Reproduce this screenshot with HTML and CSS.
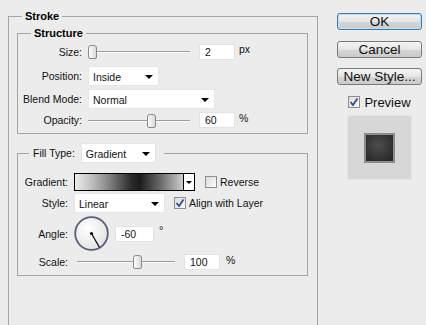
FILE: index.html
```html
<!DOCTYPE html>
<html lang="en">
<head>
    <meta charset="UTF-8">
    <title>Layer Style - Stroke</title>
    <link rel="stylesheet" href="styles.css">
</head>
<body>
<div class="dialog">
    <fieldset class="group stroke">
        <legend class="legend-main">Stroke</legend>
        <div class="stroke-body">

            <fieldset class="group structure">
                <legend class="legend-sub">Structure</legend>
                <div class="group-body">
                    <div class="row row-size">
                        <span class="lbl">Size:</span>
                        <div class="slider"><span class="thumb" style="left: 0px"></span></div>
                        <span class="num">2</span>
                        <span class="unit">px</span>
                    </div>
                    <div class="row row-sel">
                        <span class="lbl">Position:</span>
                        <div class="select sel-position">Inside</div>
                    </div>
                    <div class="row row-sel">
                        <span class="lbl">Blend Mode:</span>
                        <div class="select sel-blend">Normal</div>
                    </div>
                    <div class="row row-opacity">
                        <span class="lbl">Opacity:</span>
                        <div class="slider"><span class="thumb" style="left: 59px"></span></div>
                        <span class="num">60</span>
                        <span class="unit">%</span>
                    </div>
                </div>
            </fieldset>

            <fieldset class="group fill">
                <legend class="legend-fill">
                    <span>Fill Type:</span>
                    <div class="select sel-filltype">Gradient</div>
                </legend>
                <div class="group-body fill-body">
                    <div class="row row-gradient">
                        <span class="lbl lbl-fill">Gradient:</span>
                        <div class="gradient">
                            <span class="ramp"></span>
                            <span class="ramp-arrow"></span>
                        </div>
                        <label class="check-label reverse">
                            <span class="check"></span>Reverse
                        </label>
                    </div>
                    <div class="row row-style">
                        <span class="lbl lbl-fill">Style:</span>
                        <div class="select sel-style">Linear</div>
                        <label class="check-label align">
                            <span class="check">
                                <svg width="10" height="10" viewBox="0 0 10 10"><path d="M1.5 5 L4 8 L8.5 1.5" fill="none" stroke="#2a4d9c" stroke-width="1.8"/></svg>
                            </span>Align with Layer
                        </label>
                    </div>
                    <div class="row row-angle">
                        <span class="lbl lbl-fill">Angle:</span>
                        <svg class="dial" width="35" height="35" viewBox="0 0 35 35">
                            <defs>
                                <radialGradient id="dialFill" cx="40%" cy="35%" r="70%">
                                    <stop offset="0" stop-color="#ffffff"/>
                                    <stop offset="1" stop-color="#e2e2e2"/>
                                </radialGradient>
                            </defs>
                            <circle cx="17.5" cy="17.5" r="16.3" fill="url(#dialFill)" stroke="#56607a" stroke-width="1.8"/>
                            <line x1="17.5" y1="17.5" x2="25.4" y2="31.2" stroke="#000" stroke-width="1.2"/>
                            <circle cx="17.5" cy="17.5" r="1.6" fill="#000"/>
                        </svg>
                        <span class="num num-angle">-60</span>
                        <span class="deg">°</span>
                    </div>
                    <div class="row row-scale">
                        <span class="lbl lbl-fill">Scale:</span>
                        <div class="slider slider-scale"><span class="thumb" style="left: 56px"></span></div>
                        <span class="num">100</span>
                        <span class="unit">%</span>
                    </div>
                </div>
            </fieldset>

        </div>
    </fieldset>

    <div class="side">
        <button class="btn btn-default">OK</button>
        <button class="btn">Cancel</button>
        <button class="btn">New Style...</button>
        <label class="check-label preview">
            <span class="check">
                <svg width="10" height="10" viewBox="0 0 10 10"><path d="M1.5 5 L4 8 L8.5 1.5" fill="none" stroke="#2a4d9c" stroke-width="1.8"/></svg>
            </span>Preview
        </label>
        <div class="swatch">
            <div class="swatch-inner"></div>
        </div>
    </div>
</div>
</body>
</html>
```

FILE: styles.css
```css
body {
    margin: 0;
    background: #ececec;
    font-family: "Liberation Sans", Arial, sans-serif;
    font-size: 10.5px;
    color: #111;
    overflow: hidden;
}

.dialog {
    display: flex;
    align-items: flex-start;
}

/* group boxes */
.group {
    margin: 0;
    padding: 0;
    min-width: 0;
    border: 1px solid #a4a4a4;
    box-sizing: border-box;
}

/* outer box runs off the bottom of the window */
.stroke {
    margin: 9px 0 0 8px;
    width: 310px;
    height: 316px;
    border-bottom: none;
}

.legend-main,
.legend-sub {
    font-weight: bold;
    font-size: 11px;
    line-height: 14px;
    padding: 0 3px;
    color: #000;
}

.legend-main {
    margin-left: 13px;
}

.legend-sub {
    margin-left: 13px;
}

.stroke-body {
    padding: 3px 9px 0 8px;
}

.structure {
    width: 291px;
}

.group-body {
    display: flex;
    flex-direction: column;
    gap: 3px;
    padding: 3px 0 5px 0;
}

.fill {
    width: 291px;
    margin-top: 9px;
}

.legend-fill {
    margin-left: 11px;
    padding: 0 8px 0 4px;
    display: flex;
    align-items: center;
    gap: 6px;
    height: 20px;
}

.fill-body {
    padding: 10px 0 6px 0;
    gap: 0;
}

/* rows */
.row {
    display: flex;
    align-items: center;
}

.lbl {
    width: 64px;
    margin-right: 6px;
    text-align: right;
    flex-shrink: 0;
}

.lbl-fill {
    width: 50px;
}

.row-size {
    height: 17px;
    margin-bottom: 3px;
}

.row-sel {
    height: 20px;
}

.row-opacity {
    height: 16px;
}

.row-gradient {
    height: 18px;
}

.row-style {
    height: 20px;
    margin-top: 2px;
}

.row-angle {
    height: 35px;
    margin-top: 3px;
}

.row-scale {
    height: 15px;
    margin-top: 3px;
}

/* slider */
.slider {
    position: relative;
    width: 102px;
    height: 13px;
    flex-shrink: 0;
}

.slider::before {
    content: "";
    position: absolute;
    left: 0;
    right: 0;
    top: 6px;
    height: 1px;
    background: #9d9d9d;
    border-bottom: 1px solid #fafafa;
}

.slider-scale {
    width: 98px;
    margin-left: 3px;
}

.thumb {
    position: absolute;
    top: 0;
    width: 7px;
    height: 12px;
    border: 1px solid #8a8a8a;
    border-radius: 3px 3px 2px 2px;
    background: linear-gradient(to right, #fdfdfd, #d9d9d9);
}

/* number fields */
.num {
    display: block;
    box-sizing: border-box;
    width: 36px;
    height: 16px;
    line-height: 15px;
    padding-left: 5px;
    background: #fff;
    border: 1px solid #e3e3e3;
    margin-left: 9px;
}

.num-angle {
    width: 39px;
    margin-left: 6px;
}

.unit {
    margin-left: 4px;
    align-self: flex-start;
}

.row-scale .unit {
    margin-left: 6px;
}

.deg {
    margin-left: 5px;
    align-self: flex-start;
    margin-top: 8px;
    font-size: 11px;
}

/* selects */
.select {
    position: relative;
    box-sizing: border-box;
    height: 20px;
    line-height: 20px;
    padding-left: 4px;
    background: #fff;
    border: 1px solid #e6e6e6;
    flex-shrink: 0;
}

.select::after {
    content: "";
    position: absolute;
    right: 5px;
    top: 8px;
    border-left: 4px solid transparent;
    border-right: 4px solid transparent;
    border-top: 4px solid #000;
}

.sel-position {
    width: 71px;
}

.sel-blend {
    width: 127px;
}

.sel-filltype {
    width: 75px;
}

.sel-style {
    width: 91px;
}

/* gradient picker */
.gradient {
    display: flex;
    box-sizing: border-box;
    width: 121px;
    height: 18px;
    border: 1px solid #000;
    flex-shrink: 0;
}

.ramp {
    flex: 1;
    background: linear-gradient(to right, #ececec 0%, #cacaca 12%, #8a8a8a 30%, #2b2b2b 52%, #1c1c1c 60%, #6e6e6e 80%, #cdcdcd 100%);
}

.ramp-arrow {
    position: relative;
    width: 10px;
    border-left: 1px solid #000;
    background: #fff;
}

.ramp-arrow::after {
    content: "";
    position: absolute;
    left: 2px;
    top: 7px;
    border-left: 3px solid transparent;
    border-right: 3px solid transparent;
    border-top: 3px solid #000;
}

/* checkboxes */
.check-label {
    display: flex;
    align-items: center;
    gap: 3px;
}

.check {
    display: flex;
    align-items: center;
    justify-content: center;
    box-sizing: border-box;
    width: 12px;
    height: 12px;
    border: 1px solid #8e8e8e;
    background: linear-gradient(135deg, #dcdcdc, #fbfbfb);
}

.reverse {
    margin-left: 10px;
}

.align {
    margin-left: 9px;
}

.dial {
    display: block;
    flex-shrink: 0;
}

/* right column */
.side {
    display: flex;
    flex-direction: column;
    align-items: center;
    width: 85px;
    margin-left: 19px;
    padding-top: 13px;
}

.btn {
    box-sizing: border-box;
    width: 85px;
    height: 17px;
    padding: 0;
    font-family: "Liberation Sans", Arial, sans-serif;
    font-size: 13.5px;
    line-height: 15px;
    color: #111;
    border: 1px solid #7a7a7a;
    border-radius: 3px;
    background: linear-gradient(to bottom, #f4f4f4 0%, #e6e6e6 50%, #d6d6d6 51%, #cbcbcb 100%);
    margin-bottom: 11px;
}

.btn:nth-child(2) {
    margin-bottom: 10px;
}

.btn-default {
    border-color: #3d7bad;
    box-shadow: inset 0 0 0 1px #b6e0f5;
}

.preview {
    font-size: 13px;
    gap: 4px;
    height: 12px;
}

.swatch {
    display: flex;
    align-items: center;
    justify-content: center;
    box-sizing: border-box;
    width: 65px;
    height: 65px;
    margin-top: 7px;
    background: #d7d7d7;
    border: 1px solid #e6e6e6;
}

.swatch-inner {
    box-sizing: border-box;
    width: 31px;
    height: 30px;
    border: 2px solid #8c8c8c;
    background: radial-gradient(circle at 45% 40%, #4c4c4c, #242424);
}
```
